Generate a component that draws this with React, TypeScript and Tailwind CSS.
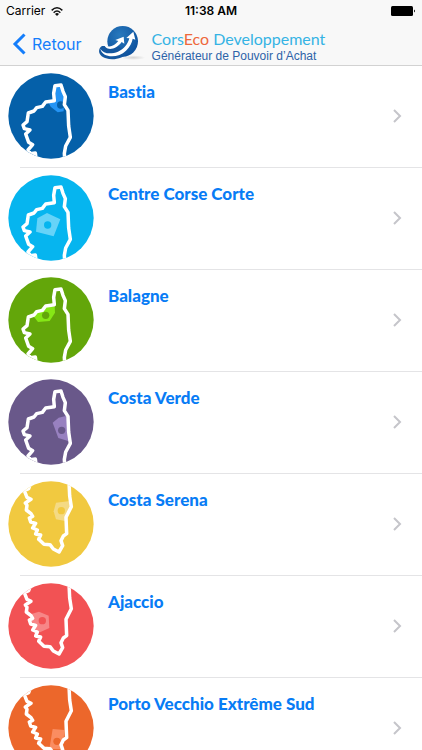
import React from "react";

interface Region {
  name: string;
  color: string;
  coast: "north" | "south";
  area: string;
  areaColor: string;
  dot: [number, number];
}

const NORTH =
  "M108 276 L106 261 L91 263 L84 252 L98 236 L86 229 L77 204 L90 192 L73 188 L69 177 L81 167 L85 141 L102 135 L110 125 L127 121 L137 108 L163 104 L161 82 L165 59 L183 57 L189 76 L196 92 L193 116 L204 133 L206 180 L211 214 L197 240 L193 262 L194 278";

const SOUTH =
  "M90 32 L86 44 L73 50 L81 70 L93 76 L76 87 L81 94 L79 108 L93 119 L98 127 L88 132 L92 144 L107 148 L98 162 L112 168 L107 180 L122 183 L116 196 L132 211 L150 212 L160 225 L177 234 L188 215 L183 200 L190 186 L200 179 L198 130 L214 98 L209 66 L207 24";

const REGIONS: Region[] = [
  {
    name: "Bastia",
    color: "#0560a9",
    coast: "north",
    area: "M166 62 L181 62 L192 94 L191 136 L173 139 L152 122 L146 110 L166 104 Z",
    areaColor: "#2494f5",
    dot: [182, 117],
  },
  {
    name: "Centre Corse Corte",
    color: "#06b5ef",
    coast: "north",
    area: "M112 151 L141 135 L181 154 L161 205 L108 191 Z",
    areaColor: "#66d3f8",
    dot: [143, 171],
  },
  {
    name: "Balagne",
    color: "#63a60a",
    coast: "north",
    area: "M100 138 L134 111 L164 109 L165 128 L149 153 L114 156 Z",
    areaColor: "#86e716",
    dot: [137, 136],
  },
  {
    name: "Costa Verde",
    color: "#69588a",
    coast: "north",
    area: "M158 152 L176 137 L200 131 L207 208 L175 198 Z",
    areaColor: "#9881c0",
    dot: [185, 175],
  },
  {
    name: "Costa Serena",
    color: "#f1c940",
    coast: "south",
    area: "M168 86 L211 81 L212 98 L199 142 L168 136 L161 112 Z",
    areaColor: "#f4da84",
    dot: [184, 110],
  },
  {
    name: "Ajaccio",
    color: "#f25254",
    coast: "south",
    area: "M94 114 L117 107 L146 119 L148 156 L120 169 L104 165 L106 148 L90 142 Z",
    areaColor: "#f78687",
    dot: [127, 134],
  },
  {
    name: "Porto Vecchio Extrême Sud",
    color: "#ec672b",
    coast: "south",
    area: "M158 153 L193 156 L191 184 L183 214 L148 213 Z",
    areaColor: "#fa8d61",
    dot: [171, 190],
  },
];

const WifiIcon = () => (
  <svg viewBox="0 0 36 27" className="h-[9px] w-3" aria-hidden="true">
    <g fill="none" stroke="#111" strokeWidth="4.5">
      <path d="M2 10 Q18 -5 34 10" />
      <path d="M8 17 Q18 7 28 17" />
    </g>
    <path d="M12 21 Q18 15 24 21 L18 27 Z" fill="#111" />
  </svg>
);

const BatteryIcon = () => (
  <svg viewBox="0 0 25 10" className="h-[10px] w-[25px]" aria-hidden="true">
    <rect width="22" height="10" rx="1.5" fill="#000" />
    <path d="M23 3.5 Q25 5 23 6.5 Z" fill="#000" />
  </svg>
);

const StatusBar = () => (
  <div className="grid h-[22px] grid-cols-3 items-center px-1.5 font-['Inter','Liberation_Sans',sans-serif] text-xs text-black">
    <div className="flex items-center gap-1.5">
      <span>Carrier</span>
      <WifiIcon />
    </div>
    <span className="text-center font-semibold">11:38 AM</span>
    <div className="flex justify-end">
      <BatteryIcon />
    </div>
  </div>
);

const GlobeLogo = () => (
  <svg viewBox="0 0 144 108" className="h-9 w-12 shrink-0" aria-hidden="true">
    <defs>
      <radialGradient id="globe" cx="0.4" cy="0.3" r="0.75">
        <stop offset="0" stopColor="#2879bd" />
        <stop offset="1" stopColor="#0b4f9c" />
      </radialGradient>
      <radialGradient id="shade">
        <stop offset="0" stopColor="#d4d4d4" />
        <stop offset="1" stopColor="#f8f8f8" />
      </radialGradient>
    </defs>
    <ellipse cx="106" cy="95" rx="36" ry="7" fill="url(#shade)" />
    <circle cx="74" cy="46" r="46" fill="url(#globe)" />
    {/* tail that swings out below the globe */}
    <path
      d="M12 60 C-3 70 1 90 24 97 C48 104 76 96 92 80 L60 60 Z"
      fill="#14579f"
    />
    <path
      d="M7 68 C12 96 60 98 84 74 C96 62 102 50 104 38 L112 41 L106 17 L85 36 L94 37 C90 54 78 69 60 77 C38 86 15 83 7 68 Z"
      fill="#fff"
    />
    <path
      d="M19 51 C16 72 50 78 71 48 L79 53 L77 32 L52 42 L61 45 C47 64 26 67 19 51 Z"
      fill="#fff"
    />
  </svg>
);

const NavBar = () => (
  <nav className="flex h-[43px] items-center pl-3">
    <a
      href="#retour"
      className="flex items-center gap-1.5 font-['Inter','Liberation_Sans',sans-serif] text-base text-[#157efb]"
    >
      <svg viewBox="0 0 14 22" className="h-[22px] w-3.5" aria-hidden="true">
        <path d="M12.5 1.5 L3 11 L12.5 20.5" fill="none" stroke="currentColor" strokeWidth="3" />
      </svg>
      Retour
    </a>
    <div className="ml-4 flex items-center gap-1.5">
      <GlobeLogo />
      <div className="whitespace-nowrap pt-1.5">
        <p className="font-['Lato',sans-serif] text-base leading-[18px] text-[#35b3e4]">
          Cors<span className="text-[#ee683b]">Eco</span> Developpement
        </p>
        <p className="font-['Liberation_Sans',Arial,sans-serif] text-xs leading-4 text-[#2d63a8]">
          Générateur de Pouvoir d’Achat
        </p>
      </div>
    </div>
  </nav>
);

const RegionBadge: React.FC<{ region: Region }> = ({ region }) => {
  const clipId = `clip-${region.name.replace(/\s/g, "-")}`;

  return (
    <svg viewBox="24 21 258 258" className="h-[86px] w-[86px] shrink-0" aria-hidden="true">
      <clipPath id={clipId}>
        <circle cx="153" cy="150" r="128" />
      </clipPath>
      <g clipPath={`url(#${clipId})`}>
        <rect x="24" y="21" width="258" height="258" fill={region.color} />
        <path d={region.area} fill={region.areaColor} />
        <circle cx={region.dot[0]} cy={region.dot[1]} r="11" fill={region.color} />
        <path
          d={region.coast === "north" ? NORTH : SOUTH}
          fill="none"
          stroke="#fff"
          strokeWidth="10.5"
          strokeLinejoin="round"
        />
      </g>
    </svg>
  );
};

const RegionRow: React.FC<{ region: Region }> = ({ region }) => (
  <li>
    <a href="#region" className="flex h-[101px] gap-3.5 pb-2 pl-2 pr-5 pt-[7px]">
      <RegionBadge region={region} />
      <span className="grow pt-[7px] font-['Lato',sans-serif] text-[17px] font-black leading-6 text-[#087cf5] [font-variant-ligatures:none]">
        {region.name}
      </span>
      <svg viewBox="0 0 9 14" className="h-3.5 w-[9px] self-center" aria-hidden="true">
        <path d="M1 1 L7 7 L1 13" fill="none" stroke="#c5c5ca" strokeWidth="2" />
      </svg>
    </a>
    <div className="ml-5 h-px bg-[#e4e4e6]" />
  </li>
);

export default function App() {
  return (
    <div className="flex h-screen flex-col bg-white">
      <header className="shrink-0 border-b border-[#d2d2d2] bg-[#f8f8f8]">
        <StatusBar />
        <NavBar />
      </header>
      <ul className="min-h-0 grow overflow-y-auto [scrollbar-width:none]">
        {REGIONS.map((region) => (
          <RegionRow key={region.name} region={region} />
        ))}
      </ul>
    </div>
  );
}
